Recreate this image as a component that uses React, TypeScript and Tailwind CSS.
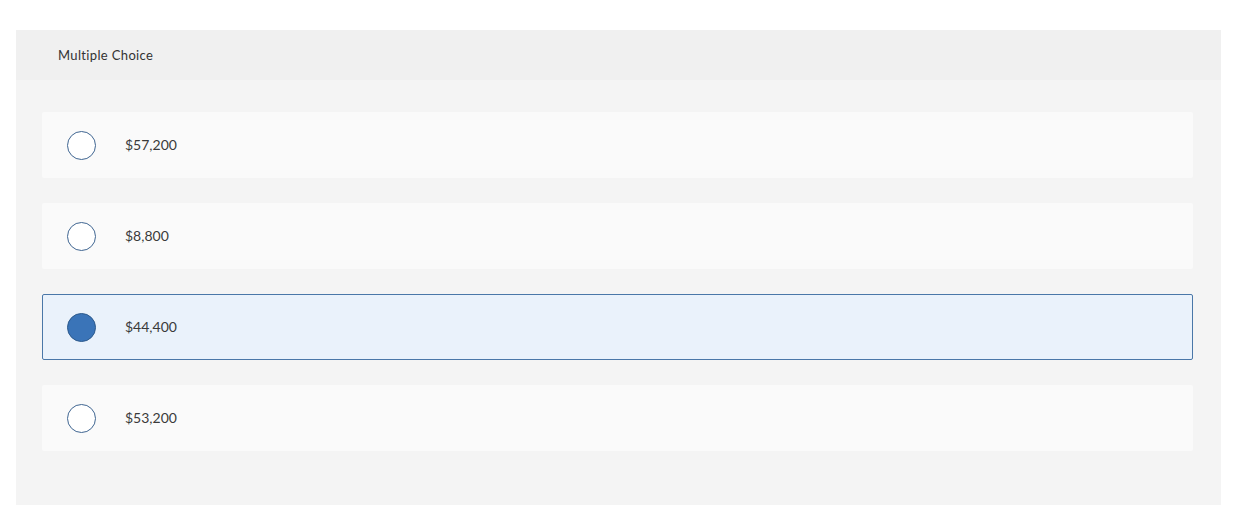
const options = [
  { label: '$57,200', selected: false },
  { label: '$8,800', selected: false },
  { label: '$44,400', selected: true },
  { label: '$53,200', selected: false },
];

export default function App() {
  return (
    <div className="min-h-[512px] bg-white pt-[30px] pl-4" style={{ fontFamily: 'Lato, "Open Sans", Arial, sans-serif' }}>
      <div className="w-[1205px] bg-[#f4f4f4]">
        <div className="h-[50px] bg-[#f0f0f0] pl-[42px] pt-[2px] flex items-center text-[13px] tracking-[0.35px] text-[#333]">
          Multiple Choice
        </div>
        <div className="pt-8 pb-[54px] pl-[26px] pr-[28px] flex flex-col gap-[25px]">
          {options.map((o) => (
            <div
              key={o.label}
              className={
                o.selected
                  ? 'h-[66px] flex items-center rounded-[2px] border border-[#4a77a8] bg-[#eaf2fb] pl-[24px]'
                  : 'h-[66px] flex items-center rounded-[2px] border border-transparent bg-[#fafafa] pl-[24px]'
              }
            >
              <span
                className={
                  o.selected
                    ? 'w-[29px] h-[29px] rounded-full border border-[#2d5a8c] bg-[#3a74b8]'
                    : 'w-[29px] h-[29px] rounded-full border-[1.5px] border-[#3f6591] bg-white'
                }
              />
              <span className="ml-[29px] pb-[2px] text-[14px] text-[#3a3a3a]">{o.label}</span>
            </div>
          ))}
        </div>
      </div>
    </div>
  );
}
